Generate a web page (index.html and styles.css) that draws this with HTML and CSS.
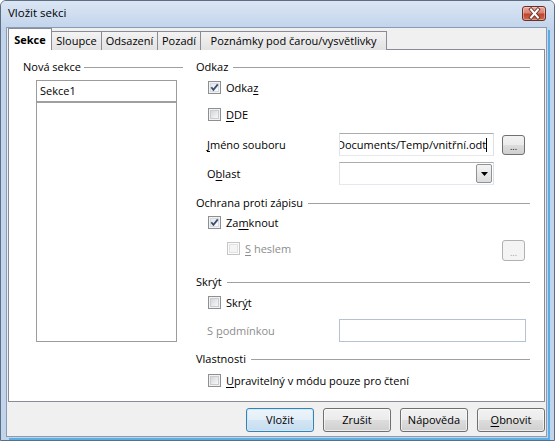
FILE: index.html
```html
<!DOCTYPE html>
<html lang="cs">
<head>
<meta charset="utf-8">
<title>Vložit sekci</title>
<link rel="stylesheet" href="styles.css">
</head>
<body>
<div class="window">
  <div class="titlebar">
    <span class="title">Vložit sekci</span>
    <div class="close">
      <svg width="21" height="13" viewBox="0 0 21 13"><path d="M7 2.5 L14 10.5 M14 2.5 L7 10.5" stroke="#5a2a22" stroke-width="3.6" stroke-linecap="square"/><path d="M7 2.5 L14 10.5 M14 2.5 L7 10.5" stroke="#ffffff" stroke-width="2" stroke-linecap="square"/></svg>
    </div>
  </div>
  <div class="client">
    <div class="tabs">
      <div class="tab active w1">Sekce</div>
      <div class="tab w2">Sloupce</div>
      <div class="tab w3">Odsazení</div>
      <div class="tab w4">Pozadí</div>
      <div class="tab w5">Poznámky pod čarou/vysvětlivky</div>
    </div>
    <div class="panel">
      <div class="col-left">
        <div class="ghead"><span>Nová sekce</span><i class="rule"></i></div>
        <div class="listbox">
          <div class="lb-edit">Sekce1</div>
          <div class="lb-list"></div>
        </div>
      </div>
      <div class="col-right">
        <div class="ghead"><span>Odkaz</span><i class="rule"></i></div>
        <div class="cb r-odkaz"><span class="box checked"><span class="fill"></span><svg class="tick" width="13" height="13" viewBox="0 0 13 13"><path d="M3.3 6.3 L5.4 8.9 L9.8 3.4" fill="none" stroke="#3a4d74" stroke-width="1.8"/></svg></span><span>Odka<u>z</u></span></div>
        <div class="cb r-dde"><span class="box"><span class="fill"></span></span><span><u>D</u>DE</span></div>
        <div class="field r-file">
          <span class="flabel"><u>J</u>méno souboru</span>
          <div class="input w-file"><span class="itext">Documents/Temp/vnitřní.odt</span><i class="caret"></i></div>
          <div class="btn-small">...</div>
        </div>
        <div class="field r-area">
          <span class="flabel">O<u>b</u>last</span>
          <div class="input w-file select"><div class="dd"><svg width="7" height="4" viewBox="0 0 7 4"><path d="M0 0 H7 L3.5 4 Z" fill="#000"/></svg></div></div>
        </div>
        <div class="ghead r-ochrana"><span>Ochrana proti zápisu</span><i class="rule"></i></div>
        <div class="cb r-zamk"><span class="box checked"><span class="fill"></span><svg class="tick" width="13" height="13" viewBox="0 0 13 13"><path d="M3.3 6.3 L5.4 8.9 L9.8 3.4" fill="none" stroke="#3a4d74" stroke-width="1.8"/></svg></span><span>Za<u>m</u>knout</span></div>
        <div class="row-heslo">
          <div class="cb sub disabled"><span class="box"><span class="fill"></span></span><span><u>S</u> heslem</span></div>
          <div class="btn-small disabled">...</div>
        </div>
        <div class="ghead r-skryt"><span>Skrýt</span><i class="rule"></i></div>
        <div class="cb r-skryt-cb"><span class="box"><span class="fill"></span></span><span>Skr<u>ý</u>t</span></div>
        <div class="field r-cond">
          <span class="flabel gray">S <u>p</u>odmínkou</span>
          <div class="input w-cond"></div>
        </div>
        <div class="ghead r-vlast"><span>Vlastnosti</span><i class="rule"></i></div>
        <div class="cb r-uprav"><span class="box"><span class="fill"></span></span><span><u>U</u>pravitelný v módu pouze pro čtení</span></div>
      </div>
    </div>
    <div class="buttons">
      <div class="btn default">Vložit</div>
      <div class="btn">Zrušit</div>
      <div class="btn">Nápověda</div>
      <div class="btn"><span><u>O</u>bnovit</span></div>
    </div>
  </div>
</div>
</body>
</html>
```
FILE: styles.css
```css
* { box-sizing: border-box; }
html, body { margin: 0; padding: 0; }
body {
  width: 555px; height: 441px; overflow: hidden;
  font-family: "Open Sans", "Noto Sans", sans-serif;
  font-size: 11px; color: #000; background: #fff;
}
u { text-decoration: underline; text-underline-offset: 2px; }

.window {
  width: 555px; height: 441px;
  border: 1px solid #5d6e84;
  border-radius: 6px 6px 0 0;
  background: #c1d4eb;
  display: flex; flex-direction: column;
}
.titlebar {
  height: 26px; flex: none;
  display: flex; align-items: flex-start;
  padding: 0 8px 0 7px;
  background: linear-gradient(#dbe6f4, #c3d5ec);
  border-radius: 5px 5px 0 0;
}
.title { font-size: 11.5px; line-height: 14px; margin-top: 5px; color: #000; }
.close {
  margin-left: auto; margin-top: 5px;
  width: 24px; height: 15px;
  border: 1px solid #6b2f26; border-radius: 3px;
  background: linear-gradient(#e9a99c 0%, #d88273 45%, #c0432f 55%, #cf6a4e 100%);
  display: flex; align-items: center; justify-content: center;
  box-shadow: inset 0 0 0 1px rgba(255,255,255,0.35);
}
.close svg { display: block; }

.client {
  flex: 1;
  margin: 0 7px 3px 5px;
  border: 1px solid #8a9cb3;
  background: #f0f0f0;
  display: flex; flex-direction: column;
  padding: 0 1px;
  box-shadow: 1px 1px 0 0 #c1d4eb, 3px 3px 0 0 #5aaee3;
}
.tabs {
  display: flex; align-items: flex-end;
  height: 22px; flex: none;
  position: relative; z-index: 1;
  margin-bottom: -1px;
}
.tab {
  height: 19px;
  border: 1px solid #898c95; border-bottom: none;
  margin-left: -1px;
  background: linear-gradient(#f3f3f3, #e2e2e2);
  line-height: 18px; text-align: center; white-space: nowrap;
}
.tab.active {
  height: 22px; margin-left: 0;
  background: #fff; font-weight: bold;
  padding-top: 2px; position: relative; z-index: 2;
}
.w1 { width: 44px; }
.w2 { width: 50px; margin-left: 0; border-left: none; }
.w3 { width: 57px; }
.w4 { width: 44px; }
.w5 { width: 187px; }

.panel {
  height: 353px; flex: none;
  background: #fff;
  border: 1px solid #898c95;
  display: flex; gap: 13px;
  padding: 9px 13px 0 14px;
}
.col-left { width: 160px; display: flex; flex-direction: column; }
.col-right { width: 334px; display: flex; flex-direction: column; }

.ghead { display: flex; align-items: center; height: 16px; line-height: 16px; white-space: nowrap; }
.ghead .rule { flex: 1; height: 1px; background: #a0a0a0; margin-left: 5px; }
.col-left .ghead .rule { margin-left: 3px; }

.listbox {
  margin: 5px 0 0 13px; width: 141px; height: 262px;
  border: 1px solid #9c9c9c;
  display: flex; flex-direction: column;
}
.lb-edit {
  height: 22px; line-height: 20px; padding-left: 3px;
  border-bottom: 2px solid #a0a0a0;
}
.lb-list { flex: 1; }

.cb { display: flex; align-items: center; height: 20px; margin-left: 12px; white-space: nowrap; }
.cb.sub { margin-left: 31px; }
.box {
  width: 13px; height: 13px; flex: none;
  border: 1px solid #8e8f8f; background: #f2f2f2;
  padding: 1px; margin-right: 5px;
  position: relative; display: flex;
}
.box .fill {
  flex: 1;
  border: 1px solid #c9ccd0;
  background: linear-gradient(135deg, #d3d6db, #f8f8f8);
}
.box.checked .fill { border-color: #d8dbdf; background: linear-gradient(135deg, #e4e7ea, #fcfcfc); }
.tick { position: absolute; left: -1px; top: -1px; }
.disabled { color: #8d8d8d; }
.disabled .box { border-color: #c5c5c5; background: #fbfbfb; }
.disabled .box .fill { border-color: #e2e2e2; background: #f4f4f4; }

.r-odkaz { margin-top: 2px; }
.r-dde { margin-top: 7px; }
.r-file { margin-top: 9px; }
.r-area { margin-top: 6px; }
.r-ochrana { margin-top: 10px; }
.r-zamk { margin-top: 1px; }
.row-heslo { margin-top: 6px; display: flex; align-items: flex-start; height: 23px; }
.row-heslo .btn-small { margin-left: auto; margin-top: 2px; margin-right: 5px; }
.r-skryt { margin-top: 13px; }
.r-skryt-cb { margin-top: 2px; }
.r-cond { margin-top: 7px; }
.r-vlast { margin-top: 9px; }
.r-uprav { margin-top: 3px; }

.field { display: flex; align-items: center; height: 23px; padding-left: 11px; white-space: nowrap; }
.flabel { width: 132px; flex: none; }
.gray { color: #8d8d8d; }
.input {
  height: 23px; flex: none;
  border: 1px solid #abadb3; border-bottom-color: #e3e9ef;
  border-left-color: #e2e3ea; border-right-color: #dbdfe6;
  background: #fff; overflow: hidden;
  display: flex; align-items: center; justify-content: flex-start;
}
.w-file { width: 155px; }
.w-cond { width: 187px; border-color: #b5c2d1; }
.itext { white-space: nowrap; flex: none; line-height: 16px; margin-left: -3px; }
.caret { flex: none; width: 1px; height: 14px; background: #000; margin-left: 0; }
.select { justify-content: flex-end; padding: 1px; }
.dd {
  width: 16px; height: 19px;
  border: 1px solid #8f9296; border-radius: 2px;
  background: linear-gradient(#f4f4f4, #dcdcdc);
  display: flex; align-items: center; justify-content: center;
}
.dd svg { display: block; }

.btn-small {
  width: 23px; height: 20px; flex: none;
  margin-left: 8px;
  border: 1px solid #707070; border-radius: 3px;
  background: linear-gradient(#f2f2f2 0%, #ebebeb 50%, #dddddd 51%, #cfcfcf 100%);
  display: flex; align-items: flex-end; justify-content: center;
  font-size: 9px; line-height: 14px;
}
.btn-small.disabled {
  border-color: #adb2b5; background: #f4f4f4; color: #a0a0a0; height: 21px;
}

.buttons {
  display: flex; justify-content: flex-end; gap: 9px;
  margin-top: 6px;
}
.btn {
  width: 68px; height: 24px;
  border: 1px solid #707070; border-radius: 3px;
  background: linear-gradient(#f2f2f2 0%, #ebebeb 50%, #dddddd 51%, #cfcfcf 100%);
  box-shadow: inset 0 0 0 1px rgba(255,255,255,0.6);
  display: flex; align-items: center; justify-content: center;
  line-height: 16px;
}
.btn.default {
  border-color: #3c7fb1;
  background: linear-gradient(#eef5fb 0%, #e2eef8 50%, #d3e5f4 51%, #c6ddf0 100%);
  box-shadow: inset 0 0 0 1px rgba(200,235,250,0.9);
}
```
